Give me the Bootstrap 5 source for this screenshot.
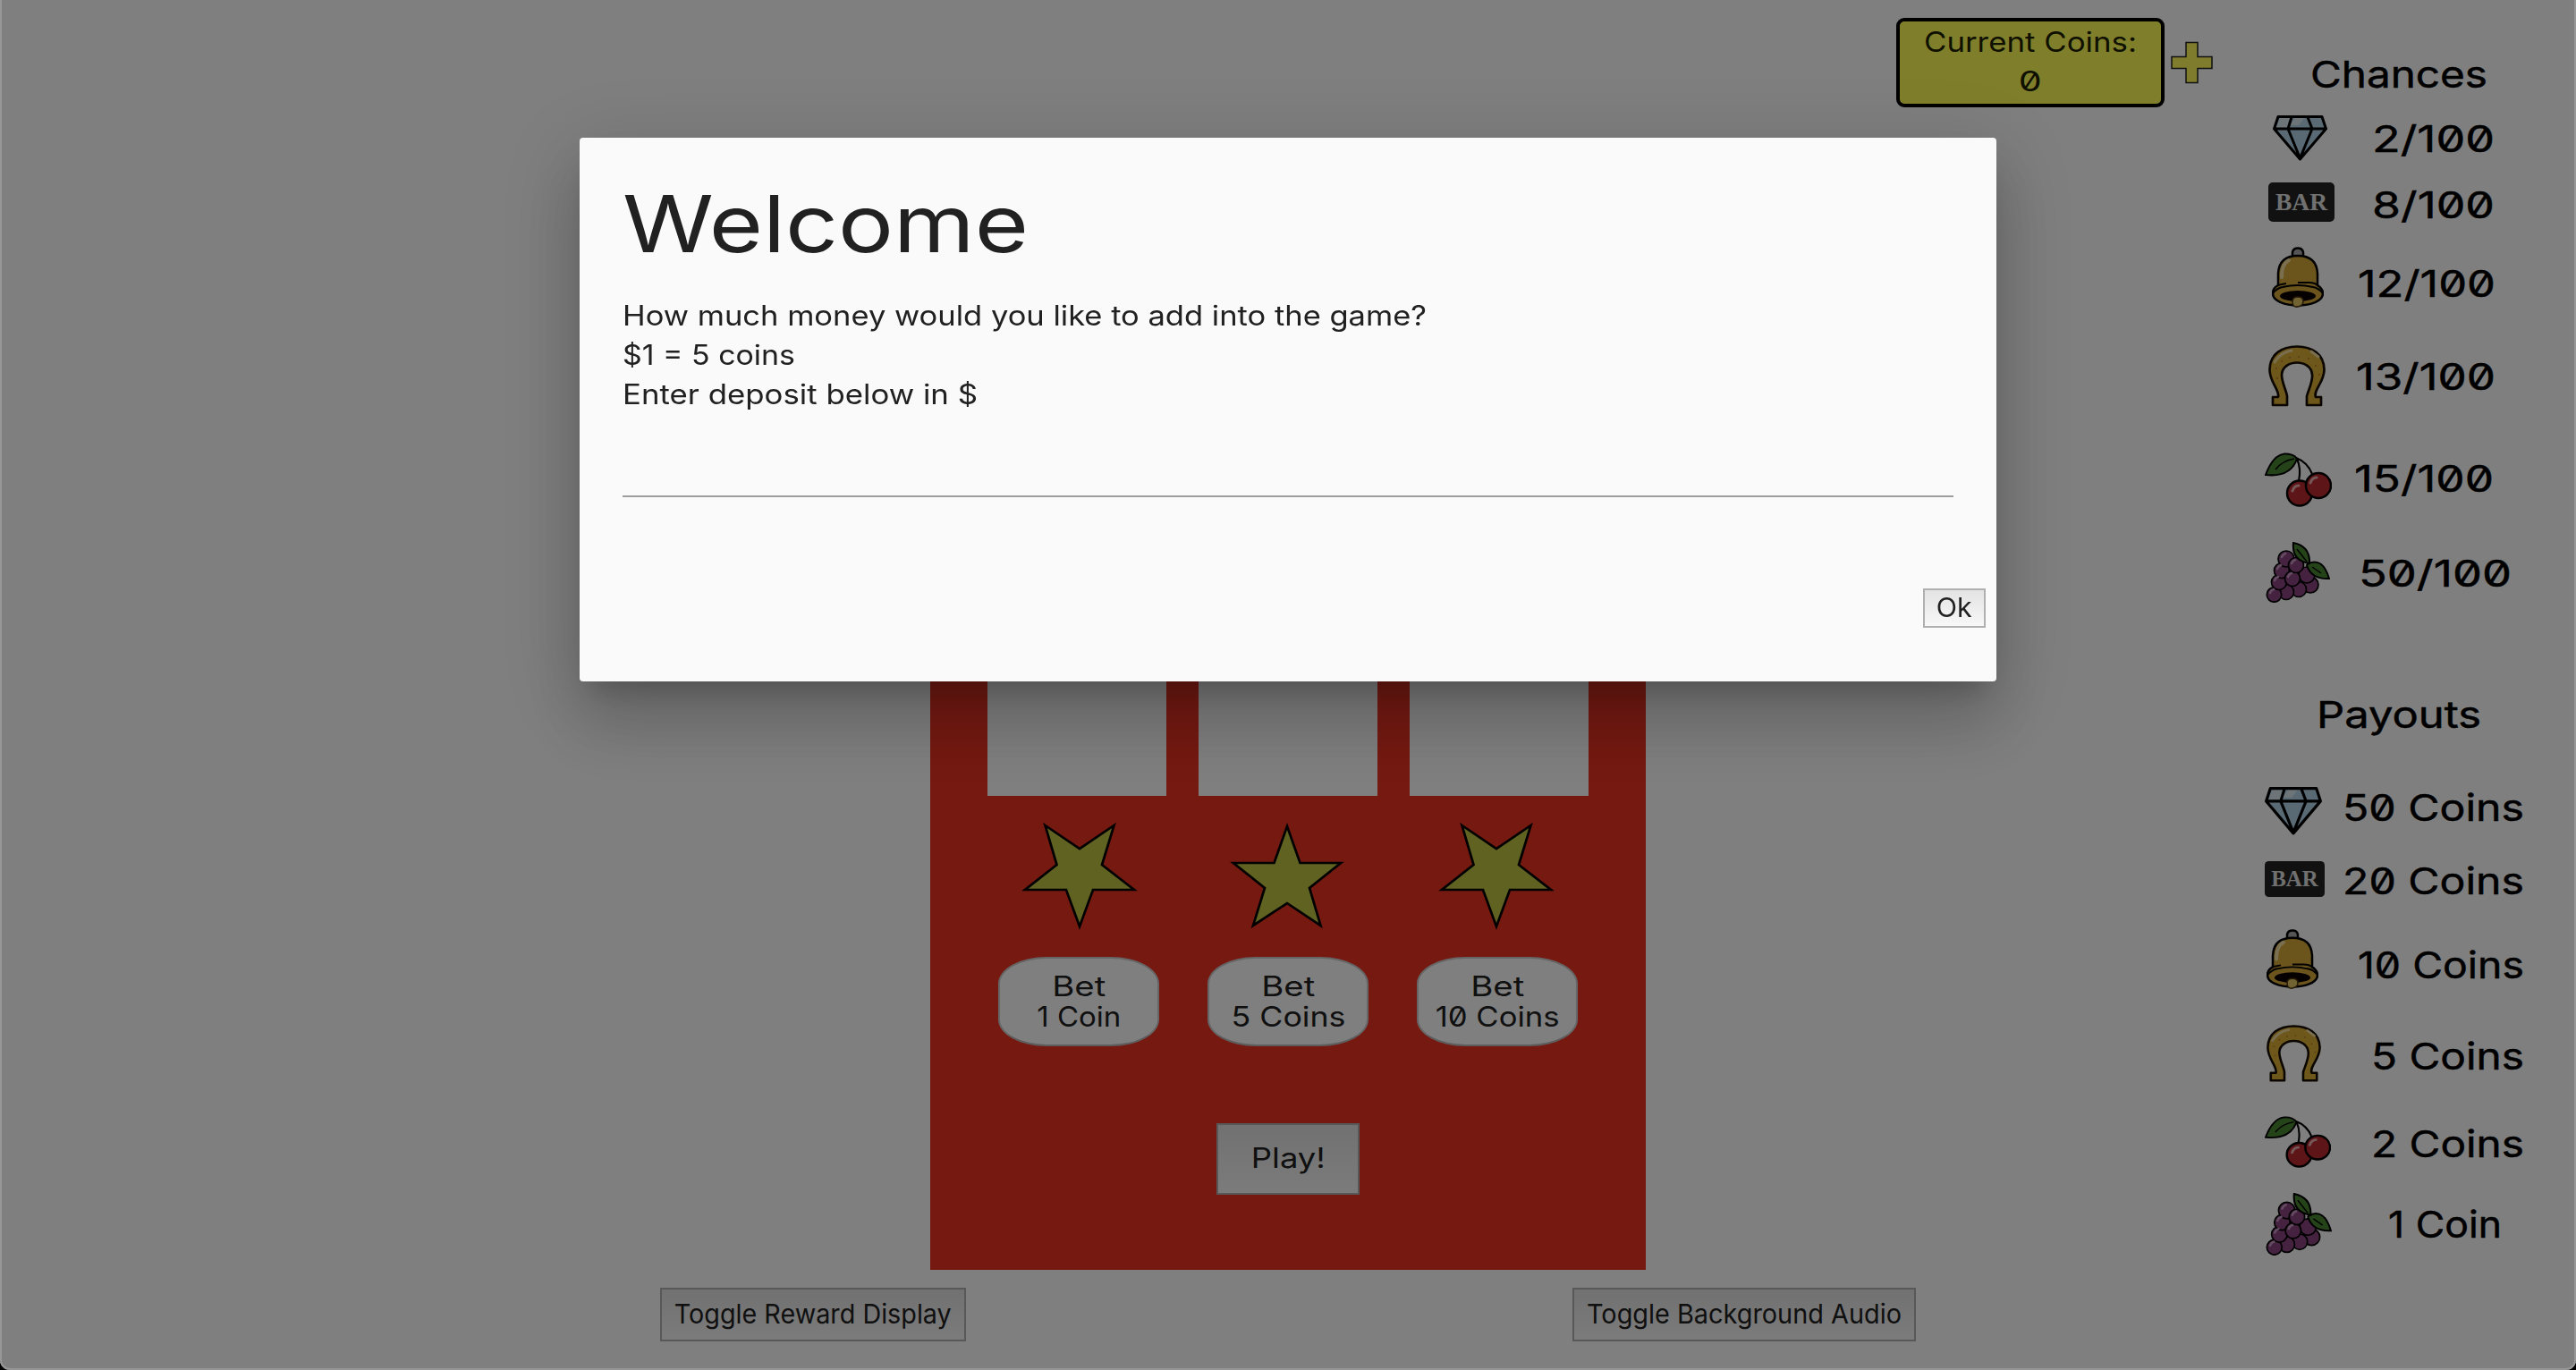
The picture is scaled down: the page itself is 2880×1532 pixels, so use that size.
<!DOCTYPE html>
<html lang="en">
<head>
<meta charset="utf-8">
<title>Slot Machine</title>
<link href="https://cdn.jsdelivr.net/npm/bootstrap@5.3.0/dist/css/bootstrap.min.css" rel="stylesheet">
<style>
html{background:#000}
body{width:2880px;height:1532px;overflow:hidden;background:#000;color:#212121;font-family:Inter,"Liberation Sans",sans-serif;font-size:31px;line-height:44px;font-feature-settings:"zero" 1}
button{font-feature-settings:inherit}
.screen{width:2880px;height:1532px;background:#fff;border-radius:0 0 11px 11px;overflow:hidden}
.screen::after{content:"";position:absolute;inset:0;width:2880px;height:1532px;border:2px solid #979797;border-top:0;border-radius:0 0 11px 11px;z-index:1100;pointer-events:none}
.fit{display:inline-block;white-space:nowrap;transform-origin:left}
.text-center .fit,.btn-mid .fit{transform-origin:center}
.playfield{width:2520px}
.topbar{height:200px;padding:20px 46px 0 0;gap:7px}
.coinbox{width:300px;height:100px;border:4px solid #000;border-radius:9px;background:#ffff56;line-height:44px;padding-top:1px;color:#212100}
.addcoin{margin-top:26px}
.machine{width:800px;height:1220px;margin-left:1040px;background:#ea3323;padding-top:290px}
.reels{gap:36px}
.reel{width:200px;height:400px;background:#fff}
.starrow{height:180px;display:block}
.bets{gap:54px}
.btn-bet{width:180px;height:100px;border:2px solid #ccc;border-bottom-color:#bbb;border-radius:30%;background:#fff;line-height:34px;color:#212121;padding:0}
.btn-old{border:2px solid #b0b0b0;background:linear-gradient(#e3e3e3,#f7f7f7);color:#212121;padding:0 0 2px;font-size:30px;line-height:1}
.btn-play{width:160px;height:80px;margin-top:86px;font-size:31px;padding-bottom:4px}
.btn-ok{width:70px;height:44px;margin:102px -36px 0 0}
.toggles{width:1404px;margin:20px 0 0 738px}
.toggles .btn-old{height:60px}
.btn-reward{width:342px}.btn-audio{width:384px}
.sidebar{width:360px;font-size:41px;line-height:40px;color:#000}
.sidebar .fit{-webkit-text-stroke:.5px #000}
.sidehead{height:66px;padding-left:63px}
.sidehead.chances{margin-top:63px}
.sidehead.payouts{height:101px;padding-left:70px}
.oddsrow{height:var(--h);padding-left:var(--x)}
.oddsrow .fit{margin:var(--d) 0 0 var(--g)}
.odds .oddsrow:nth-child(1){--h:75px;--x:21px;--d:6px;--g:50px}
.odds .oddsrow:nth-child(2){--h:72px;--x:16px;--d:5px;--g:42px}
.odds .oddsrow:nth-child(3){--h:110px;--x:20px;--d:21px;--g:38px}
.odds .oddsrow:nth-child(4){--h:120px;--x:16px;--d:15px;--g:34px}
.odds .oddsrow:nth-child(5){--h:100px;--x:12px;--d:9px;--g:25px}
.odds .oddsrow:nth-child(6){--h:173px;--x:13px;--d:15px;--g:32px}
.pays .oddsrow:nth-child(1){--h:83px;--x:12px;--d:3px;--g:23px}
.pays .oddsrow:nth-child(2){--h:76px;--x:12px;--d:2px;--g:20px}
.pays .oddsrow:nth-child(3){--h:107px;--x:14px;--d:20px;--g:44px}
.pays .oddsrow:nth-child(4){--h:102px;--x:14px;--d:15px;--g:56px}
.pays .oddsrow:nth-child(5){--h:86px;--x:12px;--d:11px;--g:45px}
.pays .oddsrow:nth-child(6){--h:90px;--x:13px;--d:15px;--g:63px}
.modal-dialog.welcome{max-width:1584px;margin:154px auto 0}
.welcome .modal-content{height:608px;border:0;border-radius:4px;background:#fafafa;color:#212121;padding:48px;box-shadow:0 48px 76px 6px rgba(0,0,0,.14),0 18px 92px 16px rgba(0,0,0,.12),0 22px 30px -14px rgba(0,0,0,.2)}
.welcome h1{font-size:88px;line-height:96px;font-weight:400;margin:0 0 33px}
.deposit{height:80px;border:0;border-bottom:2px solid #9e9e9e;background:transparent;width:1488px;margin-top:13px;outline:0}
svg{flex:none}
</style>
<script src="https://cdn.jsdelivr.net/npm/bootstrap@5.3.0/dist/js/bootstrap.bundle.min.js"></script>
</head>
<body>
<svg width="0" height="0" class="position-absolute">
<defs>
<symbol id="diamond" viewBox="0 0 61 51" preserveAspectRatio="none"><path d="M6 1.5H55L59.5 15 30.500 49 1.500 15Z" fill="#b4d4ea"/><path d="M8 3h12l-3 11H4zM25 3h10l-6 8H19z" fill="#dcebf3"/><path d="M6 1.500H55L59.500 15 30.500 49 1.500 15ZM1.500 15H59.500M21 2 17 15 30.500 48 44 15 39 2" fill="none" stroke="#000" stroke-width="3" stroke-linejoin="round"/></symbol>
<symbol id="bar" viewBox="0 0 74 44" preserveAspectRatio="none"><rect width="74" height="44" rx="5" fill="#222"/><text x="8" y="31" textLength="58" lengthAdjust="spacingAndGlyphs" font-family="Liberation Serif,serif" font-weight="700" font-size="27" fill="#e0e0e0">BAR</text></symbol>
<symbol id="bell" viewBox="0 0 58 68" preserveAspectRatio="none"><path d="M23 11V6Q24 1.500 29 1.500t6 4.500v5" fill="#aaa" stroke="#000" stroke-width="2.500"/><path d="M7 43V30Q8 10 29 10T51 30v13q6 4 6 9c0 18-56 18-56 0q0-6 6-9Z" fill="#d9ab38" stroke="#000" stroke-width="2.500"/><path d="M11 34Q11 19 19 15" fill="none" stroke="#f5dfa0" stroke-width="4" stroke-linecap="round"/><path d="M1 52q5-6 11-7 17-4 34 0 6 1 11 7M6 43l10-2M29 40h12q8 0 11 4" fill="none" stroke="#000" stroke-width="2"/><ellipse cx="29" cy="55" rx="20" ry="6" fill="#0b0200"/><path d="M23 61q0-5 6-5t6 5-6 6-6-6Z" fill="#e4c665" stroke="#4a3510" stroke-width="1.500"/></symbol>
<symbol id="shoe" viewBox="0 0 64 69" preserveAspectRatio="none"><path d="M5 67V58H11C13 50 1 41 1.500 27 2 10 15 1.500 32 1.500S62 10 62.500 27C63 41 50 50 53 58H59V67H43V57C45 50 50 40 49 33 48 15 16 15 15 33 15 42 20 50 21 57V67Z" fill="#dbae35" stroke="#160d00" stroke-width="2.700" stroke-linejoin="round"/><path d="M7 19Q14 8 26 6M48 7l8 6" fill="none" stroke="#f4dda0" stroke-width="3" stroke-linecap="round"/><g fill="#bd7620"><circle cx="9" cy="26" r="1"/><circle cx="15" cy="18" r="1"/><circle cx="24" cy="14" r="1"/><circle cx="34" cy="13" r="1"/><circle cx="45" cy="15" r="1"/><circle cx="53" cy="23" r="1"/><circle cx="57" cy="33" r="1"/><circle cx="10" cy="37" r="1"/></g></symbol>
<symbol id="cherry" viewBox="0 0 75 61" preserveAspectRatio="none"><path d="M36 7Q41 18 38 32M35 6Q48 11 53 24" fill="none" stroke="#000" stroke-width="2.200"/><path d="M1 25Q9 3 22 1.500 32 1 36 7 29 28 1 25Z" fill="#4b8630" stroke="#000" stroke-width="2"/><path d="M12 19Q20 9 33 7" fill="none" stroke="#000" stroke-width="1.500"/><circle cx="39" cy="45.500" r="14" fill="#bc2a30" stroke="#000" stroke-width="2.500"/><circle cx="60" cy="37" r="14" fill="#bc2a30" stroke="#000" stroke-width="2.500"/><path d="M31 43q2-6 7-6M51 34q2-6 7-6" stroke="#eab0b0" stroke-width="3" fill="none" stroke-linecap="round"/></symbol>
<symbol id="grapes" viewBox="0 0 72 68" preserveAspectRatio="none"><g fill="#8a447f" stroke="#000" stroke-width="1.700"><circle cx="50" cy="48" r="9"/><circle cx="37" cy="53" r="8.500"/><circle cx="23" cy="56" r="8.500"/><circle cx="9.500" cy="59" r="8.200"/><circle cx="46" cy="37" r="9"/><circle cx="15" cy="45" r="8.500"/><circle cx="18" cy="32" r="8.500"/><circle cx="23" cy="19" r="9"/><circle cx="30" cy="41" r="8.500"/><circle cx="34" cy="26" r="8.500"/></g><g fill="none" stroke="#c99ac4" stroke-width="2.500" stroke-linecap="round"><path d="M5 57q1-3 4-4M10 43q1-3 4-4M13 30q1-3 4-4M18 17q1-3 4-4M29 24q1-3 4-4M25 39q1-3 4-4"/></g><path d="M31 1Q50 5 49 24 29 21 31 1ZM48 24Q64 17 71 41 51 42 46 26Z" fill="#4b8630" stroke="#000" stroke-width="2"/><path d="M35 8l11 14M52 28l10 7" stroke="#000" stroke-width="1.500"/></symbol>
</defs>
</svg>
<div class="screen d-flex">
<main class="playfield">
<header class="topbar d-flex justify-content-end align-items-start">
<div class="coinbox text-center"><span class="fit" data-w="238">Current Coins:</span><br><span class="fit" data-w="26">0</span></div>
<svg class="addcoin" width="47" height="48" viewBox="0 0 47 48"><path d="M17 1.500H30V17.500H46V30.500H30V46.500H17V30.500H1V17.500H17Z" fill="#fff95c" stroke="#222" stroke-width="1.500"/></svg>
</header>
<section class="machine">
<div class="reels d-flex justify-content-center"><div class="reel"></div><div class="reel"></div><div class="reel"></div></div>
<svg class="starrow" width="800" height="180" viewBox="1040 890 800 180">
<g fill="#bec440" stroke="#000" stroke-width="2.700">
<path id="upset" d="M1168.500 923 1207 949 1245.500 923 1232 967 1268 995H1222L1207 1036 1192 995H1146L1181.500 967Z"/>
<path d="M1439 924 1453.500 965H1499L1464 993 1476.500 1035 1439 1010 1401 1035 1414 993 1379 965H1424.500Z"/>
<use href="#upset" x="466"/>
</g></svg>
<div class="bets d-flex justify-content-center">
<button class="btn-bet btn-mid"><span class="fit" data-w="60">Bet</span><br><span class="fit" data-w="94">1 Coin</span></button>
<button class="btn-bet btn-mid"><span class="fit" data-w="60">Bet</span><br><span class="fit" data-w="128">5 Coins</span></button>
<button class="btn-bet btn-mid"><span class="fit" data-w="60">Bet</span><br><span class="fit" data-w="139">10 Coins</span></button>
</div>
<div class="d-flex justify-content-center"><button class="btn-old btn-play btn-mid"><span class="fit" data-w="83">Play!</span></button></div>
</section>
<footer class="toggles d-flex justify-content-between">
<button class="btn-old btn-reward btn-mid"><span class="fit" data-w="310">Toggle Reward Display</span></button>
<button class="btn-old btn-audio btn-mid"><span class="fit" data-w="352">Toggle Background Audio</span></button>
</footer>
</main>
<aside class="sidebar">
<div class="sidehead chances"><span class="fit" data-w="198">Chances</span></div>
<div class="odds">
<div class="oddsrow d-flex align-items-start"><svg width="61" height="51"><use href="#diamond"/></svg><span class="fit" data-w="137">2/100</span></div>
<div class="oddsrow d-flex align-items-start"><svg width="74" height="44"><use href="#bar"/></svg><span class="fit" data-w="137">8/100</span></div>
<div class="oddsrow d-flex align-items-start"><svg width="58" height="68"><use href="#bell"/></svg><span class="fit" data-w="154">12/100</span></div>
<div class="oddsrow d-flex align-items-start"><svg width="64" height="69"><use href="#shoe"/></svg><span class="fit" data-w="156">13/100</span></div>
<div class="oddsrow d-flex align-items-start"><svg width="75" height="61"><use href="#cherry"/></svg><span class="fit" data-w="156">15/100</span></div>
<div class="oddsrow d-flex align-items-start"><svg width="72" height="68"><use href="#grapes"/></svg><span class="fit" data-w="171">50/100</span></div>
</div>
<div class="sidehead payouts"><span class="fit" data-w="184">Payouts</span></div>
<div class="pays">
<div class="oddsrow d-flex align-items-start"><svg width="64" height="54" viewBox="0 0 61 51" preserveAspectRatio="none"><use href="#diamond" width="61" height="51"/></svg><span class="fit" data-w="203">50 Coins</span></div>
<div class="oddsrow d-flex align-items-start"><svg width="67" height="40"><use href="#bar"/></svg><span class="fit" data-w="203">20 Coins</span></div>
<div class="oddsrow d-flex align-items-start"><svg width="58" height="67"><use href="#bell"/></svg><span class="fit" data-w="186">10 Coins</span></div>
<div class="oddsrow d-flex align-items-start"><svg width="61" height="64"><use href="#shoe"/></svg><span class="fit" data-w="171">5 Coins</span></div>
<div class="oddsrow d-flex align-items-start"><svg width="74" height="58"><use href="#cherry"/></svg><span class="fit" data-w="171">2 Coins</span></div>
<div class="oddsrow d-flex align-items-start"><svg width="74" height="70"><use href="#grapes"/></svg><span class="fit" data-w="127">1 Coin</span></div>
</div>
</aside>
</div>
<div class="modal-backdrop show"></div>
<div class="modal show d-block overflow-hidden" tabindex="-1">
<div class="modal-dialog welcome">
<div class="modal-content d-block">
<h1><span class="fit" data-w="454">Welcome</span></h1>
<div><span class="fit" data-w="899">How much money would you like to add into the game?</span></div>
<div><span class="fit" data-w="193">$1 = 5 coins</span></div>
<div><span class="fit" data-w="397">Enter deposit below in $</span></div>
<input class="deposit d-block" type="text" aria-label="Deposit">
<div class="d-flex justify-content-end"><button class="btn-old btn-ok btn-mid"><span class="fit" data-w="40">Ok</span></button></div>
</div>
</div>
</div>
<script>
// Stretch each label horizontally to its display width
document.querySelectorAll('.fit').forEach(function (el) {
  el.style.transform = 'scaleX(' + (el.dataset.w / el.getBoundingClientRect().width) + ')';
});
</script>
</body>
</html>
